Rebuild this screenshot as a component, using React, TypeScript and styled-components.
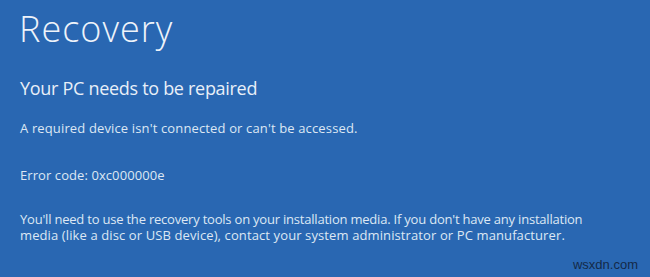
import React from "react";
import styled, { createGlobalStyle } from "styled-components";

const Global = createGlobalStyle`
  html, body { margin: 0; padding: 0; background: #2967b2; }
  #root { width: 650px; height: 277px; }
`;

const Screen = styled.div`
  position: relative;
  width: 650px;
  height: 277px;
  box-sizing: border-box;
  padding: 11px 0 0 19px;
  background: #2967b2;
  color: #e6eef8;
  font-family: "Open Sans", "Noto Sans", sans-serif;
  overflow: hidden;
`;

const Title = styled.h1`
  margin: 0;
  font-size: 36px;
  line-height: 36px;
  font-weight: 300;
  letter-spacing: 1px;
  color: #eef3fa;
`;

const Subtitle = styled.h2`
  margin: 31.5px 0 0 1px;
  font-size: 18px;
  line-height: 18px;
  font-weight: 400;
  letter-spacing: -0.3px;
  color: #e8eff8;
`;

const Line = styled.p<{ $gap: number; $spacing: number }>`
  margin: ${(p) => p.$gap}px 0 0 1px;
  font-size: 13px;
  line-height: 13px;
  font-weight: 400;
  letter-spacing: ${(p) => p.$spacing}px;
  color: #dde7f4;
`;

const Paragraph = styled.p`
  margin: 29.5px 0 0 1px;
  font-size: 13px;
  line-height: 16px;
  font-weight: 400;
  color: #dde7f4;
`;

const ParaLine = styled.span<{ $spacing: number }>`
  display: block;
  white-space: nowrap;
  letter-spacing: ${(p) => p.$spacing}px;
`;

const Watermark = styled.span`
  position: absolute;
  right: 12px;
  bottom: 5px;
  font-family: "Liberation Sans", Arial, sans-serif;
  font-size: 13px;
  color: #142a48;
`;

export default function App() {
  return (
    <>
      <Global />
      <Screen>
        <Title>Recovery</Title>
        <Subtitle>Your PC needs to be repaired</Subtitle>
        <Line $gap={25} $spacing={0.14}>
          A required device isn't connected or can't be accessed.
        </Line>
        <Line $gap={34} $spacing={0.08}>
          Error code: 0xc000000e
        </Line>
        <Paragraph>
          <ParaLine $spacing={-0.21}>
            You'll need to use the recovery tools on your installation media. If you don't have any installation
          </ParaLine>
          <ParaLine $spacing={0.11}>
            media (like a disc or USB device), contact your system administrator or PC manufacturer.
          </ParaLine>
        </Paragraph>
        <Watermark>wsxdn.com</Watermark>
      </Screen>
    </>
  );
}
